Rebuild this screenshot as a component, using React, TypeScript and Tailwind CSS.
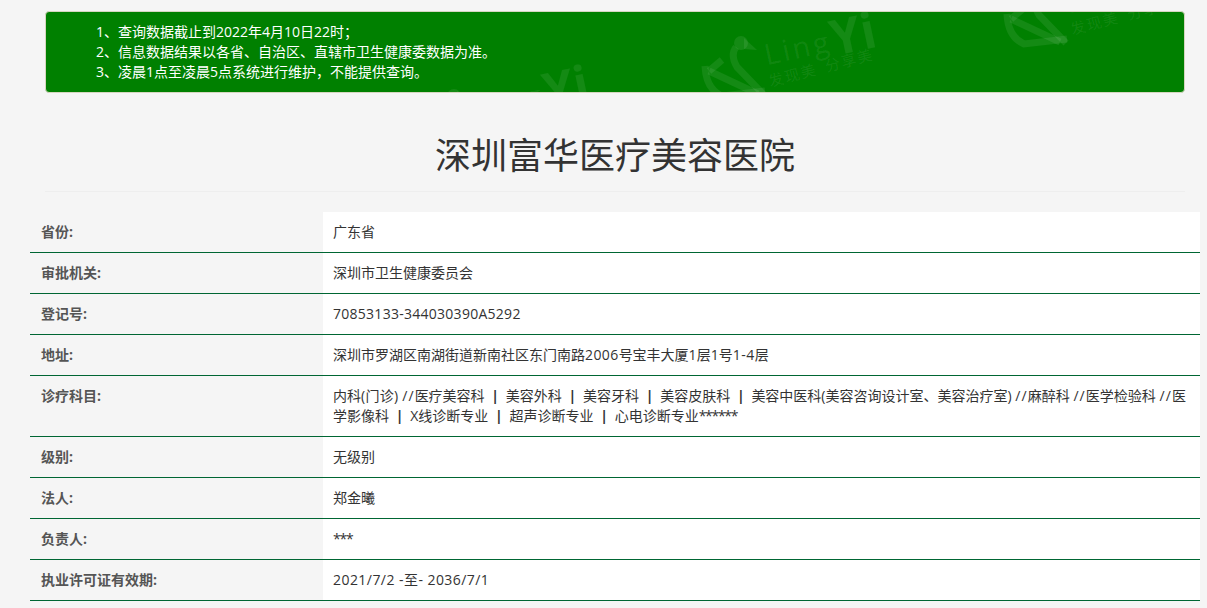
import React from "react";

function Pipe() {
  return <span className="inline-block w-[21.2px] text-center font-bold">|</span>;
}

function Slashes() {
  return <span className="tracking-[1.1px]">//</span>;
}

const departments = (
  <>
    内科<span className="tracking-[0.25px]">(门诊) </span>
    <Slashes />医疗美容科<Pipe />美容外科<Pipe />美容牙科<Pipe />美容皮肤科<Pipe />美容中医科(美容咨询设计室、美容治疗室) <Slashes />麻醉科 <Slashes />医学检验科 <Slashes />医学影像科<Pipe />X线诊断专业<Pipe />超声诊断专业<Pipe />心电诊断专业
    <span className="tracking-[-1.3px]">******</span>
  </>
);

const rows: { label: string; value: React.ReactNode }[] = [
  { label: "省份:", value: "广东省" },
  { label: "审批机关:", value: "深圳市卫生健康委员会" },
  { label: "登记号:", value: <span className="tracking-[0.27px]">70853133-344030390A5292</span> },
  {
    label: "地址:",
    value: (
      <>
        深圳市罗湖区南湖街道新南社区东门南路<span className="tracking-[0.4px]">2006</span>号宝丰大厦1层1号<span className="tracking-[0.5px]">1-4</span>层
      </>
    ),
  },
  { label: "诊疗科目:", value: departments },
  { label: "级别:", value: "无级别" },
  { label: "法人:", value: "郑金曦" },
  { label: "负责人:", value: <span className="tracking-[-1.2px]">***</span> },
  { label: "执业许可证有效期:", value: <span className="tracking-[0.45px]">2021/7/2 -至- 2036/7/1</span> },
];

function Watermark({ className }: { className: string }) {
  return (
    <div className={`absolute h-[95px] w-[180px] text-white/[0.08] ${className}`}>
      <svg className="absolute left-[-3px] top-[20px]" width="70" height="75" viewBox="0 0 70 75" fill="none" stroke="currentColor">
        <path d="M36 12Q30 20 37 32L64 60" strokeWidth="7" />
        <circle cx="41" cy="8" r="7" fill="currentColor" stroke="none" />
        <path d="M44 3L57 15L44 14Z" fill="currentColor" stroke="none" />
        <path d="M5 31Q6 54 22 61L65 56" strokeWidth="7" />
        <path d="M9 36L58 59" strokeWidth="7" />
        <path d="M9 36L22 25" strokeWidth="7" />
      </svg>
      <div className="absolute left-[65px] top-[6px] flex h-[50px] origin-bottom-left -rotate-12 items-baseline whitespace-nowrap font-['Open_Sans',sans-serif]">
        <span className="text-[29px] font-normal leading-[50px] tracking-[3px]">Ling</span>
        <span className="relative top-[5px] text-[49px] font-bold leading-[50px]">Yi</span>
      </div>
      <div className="absolute left-[68px] top-[57px] flex origin-bottom-left -rotate-[15deg] gap-[9px] whitespace-nowrap text-[15px] leading-[18px] tracking-[1.5px]">
        <span>发现美</span>
        <span>分享美</span>
      </div>
    </div>
  );
}

export default function App() {
  return (
    <div className="min-h-[608px] overflow-hidden bg-[#f5f5f5] font-['Open_Sans','Noto_Sans_CJK_SC',sans-serif] text-sm leading-5 text-[#333]">
      <div className="ml-[30px] w-[1170px] pt-[11px]">
        <div className="relative mx-[15px] overflow-hidden rounded border border-[#d6d6c0] bg-[#008000] px-[50px] py-[10px] text-white">
          <Watermark className="left-[657px] top-[3px]" />
          <Watermark className="left-[959px] top-[-49px]" />
          <Watermark className="left-[370px] top-[56px]" />
          <div className="relative">
            <p>1、查询数据截止到2022年4月10日22时；</p>
            <p>2、信息数据结果以各省、自治区、直辖市卫生健康委数据为准。</p>
            <p>3、凌晨1点至凌晨5点系统进行维护，不能提供查询。</p>
          </div>
        </div>

        <div className="mx-[15px] mb-5 mt-[43px] border-b border-[#eee] pb-[15px]">
          <h1 className="text-center text-[36px] font-normal leading-[40px]">深圳富华医疗美容医院</h1>
        </div>

        <div>
          {rows.map((row) => (
            <div key={row.label} className="grid grid-cols-[293px_1fr] border-b border-[#006633]">
              <div className="px-[11px] py-[10px] font-bold text-[#555]">{row.label}</div>
              <div className="bg-white p-[10px] break-words">{row.value}</div>
            </div>
          ))}
        </div>
      </div>
    </div>
  );
}
